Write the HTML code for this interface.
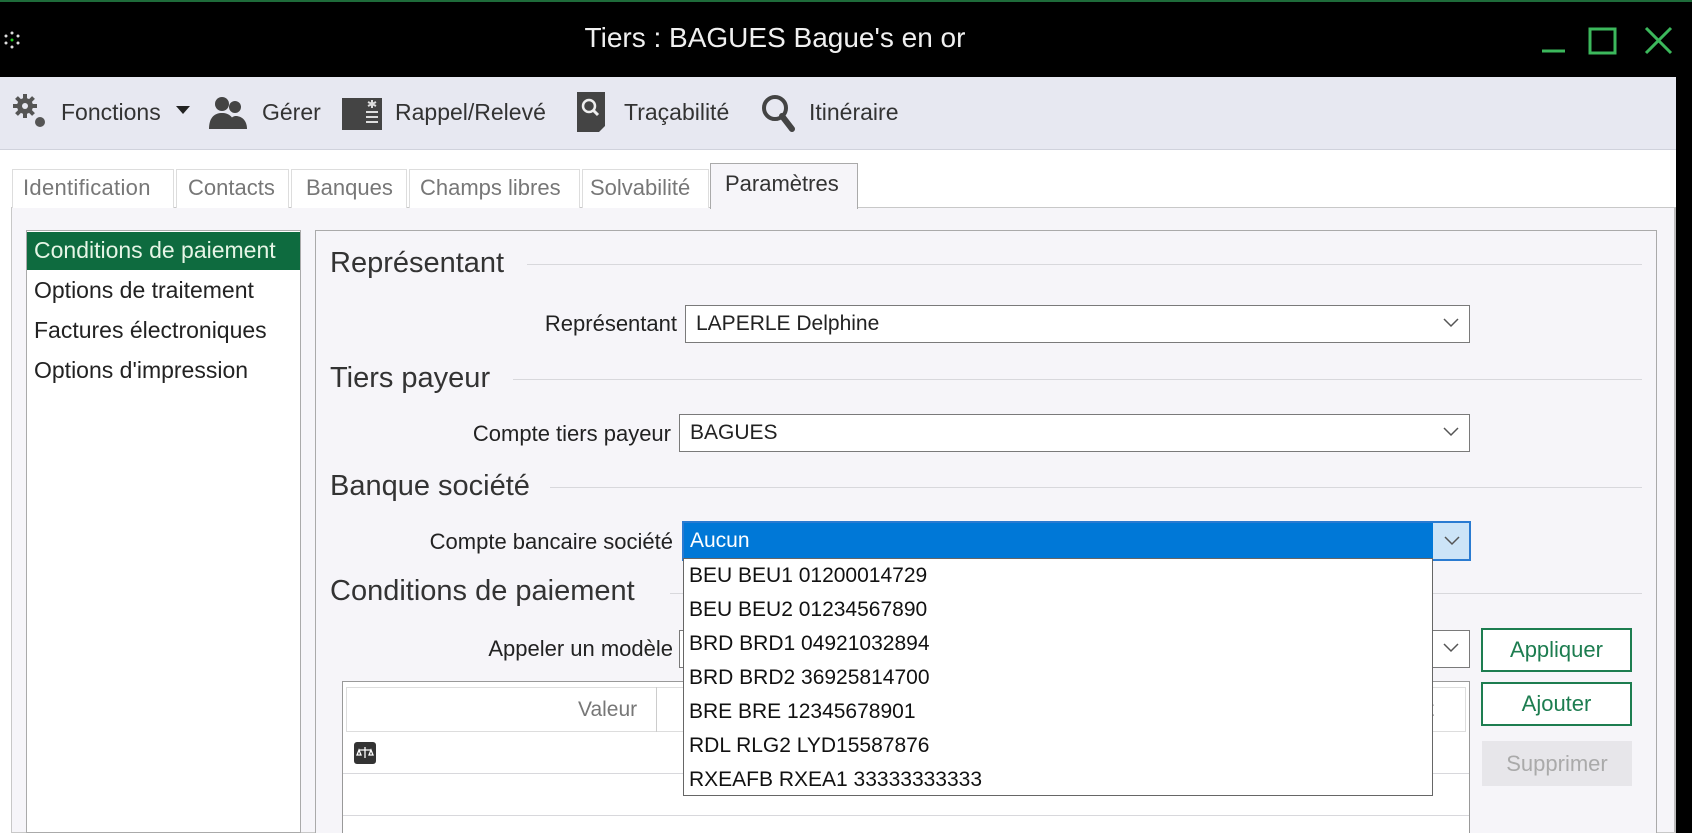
<!DOCTYPE html>
<html><head><meta charset="utf-8"><style>
*{margin:0;padding:0;box-sizing:border-box}
body{width:1692px;height:833px;overflow:hidden;background:#000;font-family:"Liberation Sans",sans-serif;position:relative;color:#222}
.a{position:absolute}
.t{position:absolute;white-space:nowrap}
.lbl{position:absolute;white-space:nowrap;font-size:22px;text-align:right}
.combo{position:absolute;background:#fff;border:1px solid #7a7a7a;font-size:21px;padding-left:10px;line-height:36px}
.combo svg{position:absolute;right:10px;top:12px}
.h{position:absolute;font-size:29px;color:#333;white-space:nowrap}
.line{position:absolute;height:1px;background:#d8d8dc}
.btn{position:absolute;border:2px solid #1d7d50;background:#fff;color:#1d7d50;font-size:22px;text-align:center}
</style></head><body>
<div class="a" style="left:0;top:0;width:1692px;height:2px;background:#1e6b3a"></div>
<div class="a" style="left:0;top:2px;width:1692px;height:75px;background:#000"></div>
<svg class="a" style="left:2px;top:30px" width="20" height="20" viewBox="0 0 20 20"><g fill="#ddd"><circle cx="10" cy="3" r="1.5"/><circle cx="16" cy="6" r="1.5"/><circle cx="16" cy="13" r="1.5"/><circle cx="10" cy="17" r="1.5"/><circle cx="4" cy="13" r="1.5"/><circle cx="4" cy="6" r="1.5"/></g><circle cx="10" cy="10" r="1.5" fill="#2c2"/></svg>
<div class="t" style="left:0;width:1550px;text-align:center;top:22px;font-size:28px;color:#f0f0f0">Tiers : BAGUES Bague's en or</div>
<svg class="a" style="left:1540px;top:24px" width="140" height="32" viewBox="0 0 140 32"><g stroke="#3cb85c" stroke-width="3" fill="none"><path d="M2 27H25"/><rect x="50" y="5" width="25" height="24"/><path d="M106 4L131 29M131 4L106 29"/></g></svg>
<div class="a" style="left:0;top:77px;width:1676px;height:73px;background:#e7e8f1;border-bottom:1px solid #d0d2dc"></div>
<div class="a" style="left:0;top:150px;width:1676px;height:683px;background:#fff"></div>
<!-- toolbar -->
<svg class="a" style="left:11px;top:92px" width="40" height="40" viewBox="0 0 40 40"><g fill="#555"><circle cx="14" cy="14" r="8"/><g stroke="#555" stroke-width="4"><path d="M14 2V26M2 14H26M5.5 5.5L22.5 22.5M22.5 5.5L5.5 22.5"/></g><circle cx="14" cy="14" r="3" fill="#e7e8f1"/><circle cx="29" cy="30" r="5"/></g></svg>
<div class="t" style="left:61px;top:99px;font-size:23px;color:#333">Fonctions</div>
<svg class="a" style="left:176px;top:106px" width="14" height="9"><path d="M0 0H14L7 8Z" fill="#222"/></svg>
<svg class="a" style="left:207px;top:95px" width="42" height="36" viewBox="0 0 42 36"><g fill="#444"><circle cx="15" cy="9" r="7"/><path d="M2 34C2 22 8 18 15 18S28 22 28 34Z"/><circle cx="28" cy="12" r="6"/><path d="M22 34C22 24 25 21 29 21S40 24 40 34Z"/></g></svg>
<div class="t" style="left:262px;top:99px;font-size:23px;color:#333">Gérer</div>
<svg class="a" style="left:342px;top:96px" width="40" height="34"><rect x="0" y="2" width="40" height="32" fill="#444"/><g stroke="#ddd" stroke-width="2"><path d="M24 16H36M24 21H36M24 26H36M30 4V12M26 6L34 10M34 6L26 10"/></g></svg>
<div class="t" style="left:395px;top:99px;font-size:23px;color:#333">Rappel/Relevé</div>
<svg class="a" style="left:577px;top:92px" width="28" height="42"><path d="M0 0H28V34L22 40H0Z" fill="#444"/><circle cx="12" cy="14" r="6" fill="none" stroke="#eee" stroke-width="2.5"/><path d="M16 18L21 23" stroke="#eee" stroke-width="3"/></svg>
<div class="t" style="left:624px;top:99px;font-size:23px;color:#333">Traçabilité</div>
<svg class="a" style="left:760px;top:93px" width="36" height="40"><circle cx="15" cy="15" r="11" fill="none" stroke="#444" stroke-width="4"/><path d="M22 23L32 36" stroke="#444" stroke-width="6" stroke-linecap="round"/></svg>
<div class="t" style="left:809px;top:99px;font-size:23px;color:#333">Itinéraire</div>
<!-- tabs -->
<div class="a" style="left:11px;top:207px;width:1665px;height:626px;background:#f6f5f9;border:1px solid #c8c8c8;border-right:2px solid #bbb"></div>
<div class="a" style="left:12px;top:169px;width:162px;height:39px;border:1px solid #ddd;border-bottom:none;background:#fff"></div>
<div class="a" style="left:176px;top:169px;width:113px;height:39px;border:1px solid #ddd;border-bottom:none;background:#fff"></div>
<div class="a" style="left:291px;top:169px;width:116px;height:39px;border:1px solid #ddd;border-bottom:none;background:#fff"></div>
<div class="a" style="left:409px;top:169px;width:171px;height:39px;border:1px solid #ddd;border-bottom:none;background:#fff"></div>
<div class="a" style="left:582px;top:169px;width:127px;height:39px;border:1px solid #ddd;border-bottom:none;background:#fff"></div>
<div class="a" style="left:710px;top:163px;width:148px;height:46px;border:1px solid #aaa;border-bottom:none;background:#f6f5f9"></div>
<div class="t" style="left:23px;top:175px;font-size:22px;color:#777;letter-spacing:0.3px">Identification</div>
<div class="t" style="left:188px;top:175px;font-size:22px;color:#777">Contacts</div>
<div class="t" style="left:306px;top:175px;font-size:22px;color:#777">Banques</div>
<div class="t" style="left:420px;top:175px;font-size:22px;color:#777">Champs libres</div>
<div class="t" style="left:590px;top:175px;font-size:22px;color:#777">Solvabilité</div>
<div class="t" style="left:725px;top:171px;font-size:22px;color:#333">Paramètres</div>
<!-- left list -->
<div class="a" style="left:26px;top:230px;width:275px;height:603px;background:#fff;border:1px solid #aaa"></div>
<div class="a" style="left:27px;top:232px;width:273px;height:38px;background:#0e6b3f"></div>
<div class="t" style="left:34px;top:237px;font-size:23px;color:#e6f5e6">Conditions de paiement</div>
<div class="t" style="left:34px;top:277px;font-size:23px">Options de traitement</div>
<div class="t" style="left:34px;top:317px;font-size:23px">Factures électroniques</div>
<div class="t" style="left:34px;top:357px;font-size:23px">Options d'impression</div>
<!-- right panel -->
<div class="a" style="left:315px;top:230px;width:1342px;height:603px;background:#f6f5f9;border:1px solid #aaa;border-bottom:none"></div>
<div class="h" style="left:330px;top:247px">Représentant</div><div class="line" style="left:527px;top:264px;width:1115px"></div>
<div class="lbl" style="right:1015px;top:311px">Représentant</div>
<div class="combo" style="left:685px;top:305px;width:785px;height:38px">LAPERLE Delphine<svg width="16" height="10"><path d="M1 1L8 8L15 1" fill="none" stroke="#555" stroke-width="1.5"/></svg></div>
<div class="h" style="left:330px;top:362px">Tiers payeur</div><div class="line" style="left:513px;top:379px;width:1129px"></div>
<div class="lbl" style="right:1021px;top:421px">Compte tiers payeur</div>
<div class="combo" style="left:679px;top:414px;width:791px;height:38px">BAGUES<svg width="16" height="10"><path d="M1 1L8 8L15 1" fill="none" stroke="#555" stroke-width="1.5"/></svg></div>
<div class="h" style="left:330px;top:470px">Banque société</div><div class="line" style="left:550px;top:487px;width:1092px"></div>
<div class="lbl" style="right:1019px;top:529px">Compte bancaire société</div>
<div class="h" style="left:330px;top:575px">Conditions de paiement</div><div class="line" style="left:670px;top:593px;width:972px"></div>
<div class="lbl" style="right:1019px;top:636px">Appeler un modèle</div>
<div class="combo" style="left:679px;top:630px;width:791px;height:38px"><svg width="16" height="10"><path d="M1 1L8 8L15 1" fill="none" stroke="#555" stroke-width="1.5"/></svg></div>
<div class="btn" style="left:1481px;top:628px;width:151px;height:44px;line-height:40px">Appliquer</div>
<div class="btn" style="left:1481px;top:682px;width:151px;height:44px;line-height:40px">Ajouter</div>
<div class="a" style="left:1482px;top:741px;width:150px;height:45px;background:#e7e6ea;color:#aaa;font-size:22px;text-align:center;line-height:45px">Supprimer</div>
<!-- grid -->
<div class="a" style="left:342px;top:681px;width:1128px;height:152px;background:#fff;border:1px solid #999;border-bottom:none"></div>
<div class="a" style="left:346px;top:687px;width:1120px;height:45px;border:1px solid #ddd"></div>
<div class="a" style="left:656px;top:687px;width:1px;height:45px;background:#ccc"></div>
<div class="t" style="left:578px;top:698px;font-size:21px;color:#777">Valeur</div>
<div class="t" style="left:1428px;top:698px;font-size:21px;color:#777">t</div>
<div class="line" style="left:343px;top:773px;width:1126px"></div>
<div class="line" style="left:343px;top:815px;width:1126px"></div>
<svg class="a" style="left:354px;top:742px" width="22" height="22"><rect width="22" height="22" rx="3" fill="#333"/><path d="M11 5V16M5 8H17M3 13L5 8L7 13ZM15 13L17 8L19 13Z" stroke="#fff" stroke-width="1.3" fill="none"/></svg>
<!-- highlighted combo -->
<div class="a" style="left:682px;top:521px;width:789px;height:40px;border:2px solid #2a7bd1;background:#cce4f7"></div>
<div class="a" style="left:684px;top:523px;width:749px;height:36px;background:#0078d7;color:#fff;font-size:21px;line-height:36px;padding-left:6px">Aucun</div>
<svg class="a" style="left:1444px;top:536px" width="16" height="10"><path d="M1 1L8 8L15 1" fill="none" stroke="#555" stroke-width="1.5"/></svg>
<!-- dropdown -->
<div class="a" style="left:683px;top:558px;width:750px;height:238px;background:#fff;border:1px solid #666;font-size:21px;color:#111">
<div class="t" style="left:5px;top:5px">BEU BEU1 01200014729</div>
<div class="t" style="left:5px;top:39px">BEU BEU2 01234567890</div>
<div class="t" style="left:5px;top:73px">BRD BRD1 04921032894</div>
<div class="t" style="left:5px;top:107px">BRD BRD2 36925814700</div>
<div class="t" style="left:5px;top:141px">BRE BRE 12345678901</div>
<div class="t" style="left:5px;top:175px">RDL RLG2 LYD15587876</div>
<div class="t" style="left:5px;top:209px">RXEAFB RXEA1 33333333333</div>
</div>
</body></html>
